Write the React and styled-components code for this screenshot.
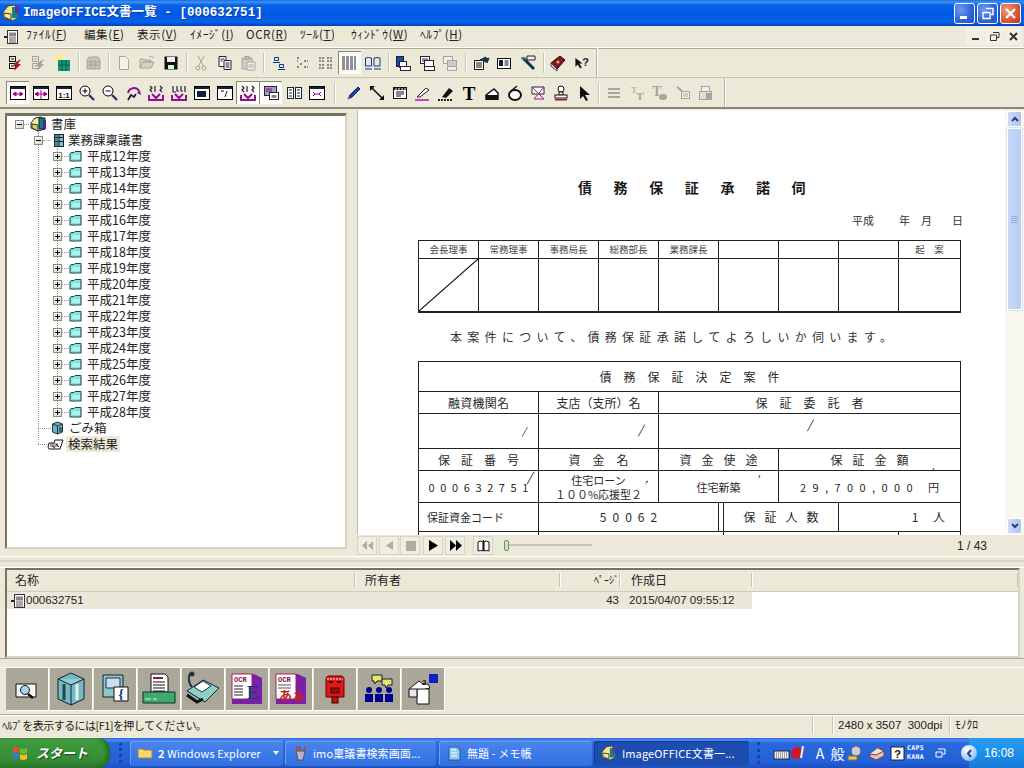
import React from "react";
import styled, { createGlobalStyle, css } from "styled-components";

const Global = createGlobalStyle`
  * { box-sizing: border-box; }
  html, body { margin: 0; padding: 0; background: #ece9d8; overflow: hidden; }
  body { font-family: "Noto Sans CJK JP", "Liberation Sans", sans-serif; color: #111; }
`;
const Win = styled.div`width:1024px;height:768px;display:flex;flex-direction:column;overflow:hidden;background:#ece9d8;font-size:12px;`;

/* ---------- title ---------- */
const TitleBar = styled.div`
  height:26px;flex:none;display:flex;align-items:center;padding:0 3px 0 2px;
  background:linear-gradient(180deg,#1a6ae8 0,#3d92f4 2px,#0a63e6 5px,#0058e2 14px,#0a62ea 22px,#0040b8 26px);
`;
const TitleText = styled.div`
  margin-left:3px;flex:1;color:#fff;font:700 12.5px/24px "Liberation Mono","Noto Sans CJK JP",monospace;letter-spacing:.08px;white-space:pre;
  text-shadow:1px 1px 0 #0b3ea8;
`;
const CapBtn = styled.div`
  width:21px;height:21px;margin-left:2px;border:1px solid #fff;border-radius:3px;display:flex;align-items:center;justify-content:center;
  background:${p=>p.$close?"radial-gradient(circle at 30% 30%,#f09a7c,#d8553a 60%,#b83a20)":"radial-gradient(circle at 30% 30%,#6f9bf0,#2f62d8 60%,#2450c0)"};
`;
/* ---------- menu ---------- */
const MenuBar = styled.div`height:22px;flex:none;display:flex;align-items:center;padding-left:3px;border-bottom:1px solid #fff;box-shadow:0 1px 0 #aca899;`;
const MenuIcon = styled.div`width:23px;display:flex;`;
const MenuItem = styled.div`width:${p=>p.$w}px;font-size:11.5px;line-height:20px;margin-top:-5px;white-space:nowrap;color:#222;letter-spacing:.6px;`;
const MenuKey = styled.u`text-underline-offset:1px;`;
const MdiGroup = styled.div`margin-left:auto;display:flex;gap:1px;padding-right:2px;`;
const MdiBtn = styled.div`width:18px;height:17px;display:flex;align-items:center;justify-content:center;background:#f2efe4;`;
/* ---------- toolbars ---------- */
const ToolRow = styled.div`height:${p=>p.$h}px;flex:none;display:flex;align-items:center;position:relative;border-bottom:${p=>p.$last?"2px solid #8a8778":"1px solid #c8c4b4"};`;
const ToolInner = styled.div`width:${p=>p.$w}px;height:100%;display:flex;align-items:center;padding-left:${p=>p.$pl}px;border-right:1px solid #b8b4a4;box-shadow:1px 0 0 #fff;`;
const TBtn = styled.div`
  width:${p=>p.$w||23.5}px;height:23px;flex:none;display:flex;align-items:center;justify-content:center;
  ${p=>p.$active&&css`background:#fbfaf5;box-shadow:inset 1px 1px 0 #8a8778,inset -1px -1px 0 #fff;`}
`;
const Sep = styled.div`width:${p=>p.$w||7}px;flex:none;height:20px;position:relative;&::after{content:"";position:absolute;left:45%;top:0;bottom:0;width:1px;background:#c8c4b4;box-shadow:1px 0 0 #fff;}`;
/* ---------- main ---------- */
const Main = styled.div`height:447px;flex:none;display:flex;`;
const TreePanel = styled.div`
  margin:4px 0 7px 5px;width:342px;background:#fff;border:2px solid #777466;border-right-color:#d8d5c6;border-bottom-color:#d8d5c6;border-top-width:3px;overflow:hidden;
`;
const TreeRow = styled.div`height:16px;display:flex;align-items:center;position:relative;padding-left:${p=>p.$pl}px;white-space:nowrap;`;
const Exp = styled.div`width:9px;height:9px;flex:none;border:1px solid #8c8c7c;background:linear-gradient(135deg,#fff,#d8d4c4);position:relative;
  &::before{content:"";position:absolute;left:1px;right:1px;top:3px;height:1px;background:#000;}
  ${p=>p.$plus&&css`&::after{content:"";position:absolute;top:1px;bottom:1px;left:3px;width:1px;background:#000;}`}`;
const Conn = styled.div`width:${p=>p.$w}px;height:0;flex:none;border-top:1px dotted #999;`;
const TreeIcon = styled.div`width:${p=>p.$w}px;flex:none;display:flex;margin-left:${p=>p.$ml||0}px;`;
const TreeLabel = styled.div`margin-left:${p=>p.$ml}px;font-size:12.5px;line-height:16px;margin-top:-1px;padding:0 1px;color:#222;${p=>p.$sel&&css`background:#ece9d8;padding:0 2px 0 2px;`}`;
const TreeGroup = styled.div`position:relative;&::before{content:"";position:absolute;left:${p=>p.$x}px;top:${p=>p.$t}px;bottom:${p=>p.$b}px;border-left:1px dotted #999;}`;
const Viewer = styled.div`margin:1px 0 0 10px;flex:1;display:flex;flex-direction:column;min-width:0;`;
const DocRow = styled.div`height:425px;flex:none;display:flex;background:#fff;`;
const Page = styled.div`flex:1;overflow:hidden;padding:68px 44px 0 60px;background:#fff;color:#333;border-left:1px solid #bbb;`;
const DocTitle = styled.div`padding-left:160px;font-size:14px;font-weight:700;line-height:18px;letter-spacing:21.6px;color:#1a1a1a;white-space:nowrap;`;
const DocDate = styled.div`margin-top:15px;padding-left:434px;height:18px;font-size:11px;line-height:18px;display:flex;color:#333;`;
const DateBit = styled.span`width:${p=>p.$w}px;flex:none;`;
const StampGrid = styled.div`margin-top:11px;width:543px;height:73px;display:grid;grid-template-columns:repeat(8,60px) 1fr;grid-template-rows:18px 1fr;border:1.5px solid #222;border-bottom-width:2px;`;
const StampCell = styled.div`border-right:${p=>p.$end?"none":"1px solid #222"};border-bottom:${p=>p.$head?"1px solid #222":"none"};font-size:9.5px;line-height:17px;text-align:center;color:#444;position:relative;`;
const Diag = styled.svg`position:absolute;inset:0;width:100%;height:100%;display:block;`;
const Sentence = styled.div`margin-top:15px;padding-left:32px;height:18px;font-size:12px;line-height:18px;letter-spacing:5.3px;white-space:nowrap;color:#333;`;
const DTable = styled.div`margin-top:15px;width:543px;border:1.5px solid #222;border-bottom:none;`;
const DRow = styled.div`height:${p=>p.$h}px;display:grid;grid-template-columns:${p=>p.$cols};border-bottom:${p=>p.$nb?"none":"1.5px solid #222"};`;
const DCell = styled.div`
  position:relative;display:flex;align-items:center;justify-content:${p=>p.$jl?"flex-start":p.$jr?"flex-end":"center"};text-align:center;white-space:nowrap;color:#2a2a2a;
  padding:0 ${p=>p.$jr||0}px 0 ${p=>p.$jl||0}px;
  border-right:${p=>p.$end?"none":"1.5px solid #222"};font-size:${p=>p.$fs||12}px;letter-spacing:${p=>p.$ls||0}px;text-indent:${p=>p.$jr||p.$jl?0:p.$ls||0}px;line-height:14px;
`;
const TwoLines = styled.div`text-indent:0;`;
const Mark = styled.span`position:absolute;right:${p=>p.$r}px;top:${p=>p.$t}px;font-size:${p=>p.$s||10}px;font-style:italic;line-height:10px;letter-spacing:0;text-indent:0;color:#111;`;
const Scroll = styled.div`width:19px;flex:none;background:#f8f7f0;display:flex;flex-direction:column;align-items:center;padding:1px 0;`;
const ScrollBtn = styled.div`width:15px;height:16px;flex:none;border:1px solid #fff;border-radius:2px;background:linear-gradient(90deg,#cfdcf8,#b0c4f0);display:flex;align-items:center;justify-content:center;`;
const ScrollThumb = styled.div`width:15px;height:182px;flex:none;margin-top:1px;border:1px solid #fff;border-radius:2px;background:linear-gradient(90deg,#c8d8f8,#b8ccf4);box-shadow:0 0 0 1px #d8e2f4;display:flex;flex-direction:column;align-items:center;justify-content:center;gap:1px;`;
const Grip = styled.i`display:block;width:7px;height:1px;background:#98aee0;`;
const ScrollFill = styled.div`flex:1;`;
const Pager = styled.div`height:21px;flex:none;display:flex;align-items:center;`;
const PBtn = styled.div`width:20px;height:19px;flex:none;margin-right:${p=>p.$mr||0}px;display:flex;align-items:center;justify-content:center;background:#f0eee2;box-shadow:inset 0 0 0 1px #d8d5c6;`;
const Slider = styled.div`margin-left:11px;width:90px;height:14px;flex:none;position:relative;&::before{content:"";position:absolute;left:2px;right:2px;top:5px;height:2px;background:#c8c5b6;}`;
const SliderThumb = styled.div`position:absolute;left:0;top:1px;width:5px;height:11px;border-radius:2px;background:#cfe4c4;border:1px solid #6a8f68;`;
const PageNo = styled.div`margin-left:auto;width:67px;font:12px/20px "Liberation Sans",sans-serif;color:#222;`;
/* ---------- list ---------- */
const Band = styled.div`height:12px;flex:none;border-top:1px solid #fff;border-bottom:1px solid #fff;position:relative;&::after{content:"";position:absolute;left:0;right:0;top:3px;height:2px;background:#d8d5c6;}`;
const ListBox = styled.div`margin:0 4px 0 5px;height:90px;flex:none;border:2px solid #777466;border-right-color:#d8d5c6;border-bottom-color:#d8d5c6;background:#fff;overflow:hidden;`;
const Header = styled.div`height:22px;display:grid;grid-template-columns:348px 205px 60px 132px 1fr;background:#ece9d8;border-bottom:1px solid #d0ccbc;`;
const HCell = styled.div`padding-left:${p=>p.$pl||0}px;text-align:${p=>p.$r?"right":"left"};padding-right:${p=>p.$r?1:0}px;font-size:${p=>p.$fs||12}px;line-height:20px;position:relative;color:#222;
  &::after{content:"";position:absolute;right:0;top:3px;bottom:4px;width:1px;background:#c8c4b4;box-shadow:1px 0 0 #fff;}`;
const ListRow = styled.div`height:17px;width:745px;display:grid;grid-template-columns:348px 205px 60px 132px;background:#ebe8da;`;
const LCell = styled.div`display:flex;align-items:center;justify-content:${p=>p.$r?"flex-end":"flex-start"};padding-left:${p=>p.$pl||0}px;padding-right:${p=>p.$r?1:0}px;font:11.5px/17px "Liberation Sans",sans-serif;color:#222;white-space:nowrap;`;
const Rule = styled.div`height:${p=>p.$h}px;flex:none;border-top:1px solid #aca899;border-bottom:1px solid #fff;`;
/* ---------- launch ---------- */
const Launch = styled.div`height:47px;flex:none;display:flex;gap:2px;padding:0 0 0 6px;`;
const LBtn = styled.div`width:42px;height:42px;background:#aca899;display:flex;align-items:center;justify-content:center;box-shadow:1px 1px 0 #fff;`;
/* ---------- status ---------- */
const Status = styled.div`height:23px;flex:none;display:flex;align-items:center;border-top:1px solid #fff;box-shadow:0 -1px 0 #aca899;font-size:11px;line-height:18px;color:#222;`;
const StatusMsg = styled.div`flex:1;padding-left:2px;letter-spacing:-.55px;white-space:nowrap;margin-top:-5px;`;
const StatusCell = styled.div`width:${p=>p.$w}px;flex:none;height:18px;margin-top:-4px;padding-left:${p=>p.$pl||0}px;border-left:1px solid #c8c4b4;box-shadow:inset 1px 0 0 #fff;white-space:pre;font-family:"Liberation Sans","Noto Sans CJK JP",sans-serif;font-size:11.5px;`;
/* ---------- taskbar ---------- */
const Taskbar = styled.div`height:30px;flex:none;display:flex;align-items:center;background:linear-gradient(180deg,#2a62d8 0,#4a8cf0 2px,#2868dc 5px,#2460d8 24px,#1c50c0 30px);color:#fff;`;
const Start = styled.div`width:110px;height:30px;flex:none;display:flex;align-items:center;padding-left:11px;border-radius:0 12px 12px 0;background:linear-gradient(180deg,#5aa85a 0,#3d9a3d 15%,#368c36 70%,#2c7a2c);box-shadow:inset -3px 0 4px #246824;`;
const StartText = styled.div`margin-left:7px;font:italic 700 13px/28px "Noto Sans CJK JP",sans-serif;letter-spacing:0;text-shadow:1px 1px 1px #1a4a1a;`;
const TaskDots = styled.div`width:20px;flex:none;height:24px;position:relative;&::after{content:"";position:absolute;left:9px;top:2px;bottom:2px;border-left:3px dotted #1a44a0;}`;
const TaskBtn = styled.div`
  width:${p=>p.$w}px;height:25px;flex:none;margin-right:${p=>p.$mr||2}px;padding-left:7px;display:flex;align-items:center;gap:5px;border-radius:3px;white-space:nowrap;overflow:hidden;font-size:11px;letter-spacing:.1px;
  background:${p=>p.$on?"#1e4db0":"linear-gradient(180deg,#4a86ec,#3a78e8 60%,#3470de)"};box-shadow:${p=>p.$on?"inset 1px 1px 1px #143890":"inset 1px 1px 0 #6ca0f4"};
`;
const TaskCount = styled.b`font-weight:700;`;
const TaskCaret = styled.div`margin-left:auto;margin-right:4px;width:0;height:0;border:3px solid transparent;border-top:4px solid #fff;margin-top:3px;`;
const Tray = styled.div`flex:1;display:flex;align-items:center;height:30px;padding-left:22px;position:relative;`;
const TrayDots = styled.div`position:absolute;left:6px;top:4px;bottom:4px;border-left:3px dotted #1a44a0;`;
const TrayGap = styled.div`width:${p=>p.$w}px;flex:none;`;
const Ime = styled.div`font-size:14px;line-height:30px;width:${p=>p.$w}px;text-align:center;flex:none;`;
const Caps = styled.div`width:28px;margin-left:2px;font:700 6.5px/9px "DejaVu Sans Mono",monospace;letter-spacing:.3px;`;
const Clock = styled.div`margin-left:auto;width:55px;height:30px;padding-left:15px;font:12px/30px "Liberation Sans",sans-serif;background:linear-gradient(180deg,#2a9cf0,#1a90e8 50%,#1878d8);position:relative;`;
const ClockCircle = styled.div`position:absolute;left:-8px;top:7px;width:16px;height:16px;border-radius:50%;background:radial-gradient(circle at 35% 30%,#fff,#a8cdf8 60%,#5a92e8);color:#1a44a0;display:flex;align-items:center;justify-content:center;`;
const Svg = styled.svg`display:block;flex:none;`;

/* ---------- small icons ---------- */
const Ic = ({ s = 18, v = 18, children }) => <Svg width={s} height={s} viewBox={`0 0 ${v} ${v}`}>{children}</Svg>;
const G = "#a8a598", K = "#000";
const bolt = (c) => <path d="M9 8 L14 5 L11 10 L14 10 L7 17 L9 12 L6 12 Z" fill={c} />;
const twoBoxes = (c) => <g fill="none" stroke={c}><rect x="2.5" y="2.5" width="6" height="5" /><rect x="2.5" y="9.5" width="6" height="5" /><path d="M4 5h3M4 12h3" /></g>;
const viewIcons = {
  fitW: <><rect x="1.5" y="2.5" width="15" height="13" fill="#fff" stroke={K} /><rect x="2" y="3" width="14" height="2" fill="#123" /><path d="M4 10h10M4 10l3-2v4zM14 10l-3-2v4z" stroke="#a00080" fill="#a00080" /></>,
  fitH: <><rect x="1.5" y="2.5" width="15" height="13" fill="#fff" stroke={K} /><rect x="2" y="3" width="14" height="2" fill="#123" /><path d="M3 10h12M9 6v9M3 10l3-2v4zM15 10l-3-2v4z" stroke="#a00080" fill="#a00080" /></>,
  one: <><rect x="1.5" y="2.5" width="15" height="13" fill="#fff" stroke={K} /><rect x="2" y="3" width="14" height="2" fill="#123" /><text x="9" y="14" fontSize="8" fontFamily="Liberation Sans" fontWeight="700" textAnchor="middle" fill="#111">1:1</text></>,
};
const zoom = (plus) => <><circle cx="7" cy="7" r="5" fill="#fff" stroke={K} /><path d="M4.5 7h5" stroke={K} />{plus && <path d="M7 4.5v5" stroke={K} />}<path d="M11 11l5 5" stroke="#336" strokeWidth="2.4" /></>;
const purpleTray = (mirror) => <g fill="none"><path d="M2 11v5h14v-5" strokeWidth="2" stroke="#901090" /><path d="M5 10l4 4 4-4" stroke="#901090" strokeWidth="2" /><path d={mirror ? "M3 2v6h3M7 2v5h2M11 2v5h2M15 2v6" : "M3 2l2 2-2 2 2 2M8 2v6M13 2l2 2-2 2 2 2"} stroke="#223" strokeWidth="1.2" /></g>;
const win = (inner) => <><rect x="1.5" y="2.5" width="15" height="13" fill="#fff" stroke={K} /><rect x="2" y="3" width="14" height="2" fill="#123" />{inner}</>;

const row1 = [
  [<>{twoBoxes("#111")}{bolt("#b01818")}</>],
  [<>{twoBoxes(G)}{bolt(G)}</>],
  [<><circle cx="5" cy="4" r="4" fill="#f6ee90" /><rect x="4" y="6" width="12" height="11" fill="#149080" /><path d="M8 6v11M12 6v11M4 11h12" stroke="#063" /></>],
  "s",
  [<><path d="M3 6l2-3h9l2 3v9H3z" fill="#c8c5b8" stroke={G} /><path d="M4 8h11M4 11h11M7 6v9M11 6v9" stroke={G} /></>],
  "s",
  [<path d="M4.5 2.5h6l3 3v10h-9z" fill="#f4f2e8" stroke={G} />],
  [<><path d="M2 14V5h4l1 1h6v2H5L2 14h11l3-6H5" fill="#d6d3c4" stroke={G} /><path d="M11 3q3-2 5 1" stroke={G} fill="none" /></>],
  [<><rect x="2.5" y="2.5" width="13" height="13" fill="#111" /><rect x="5" y="3" width="8" height="5" fill="#eee" /><rect x="6" y="11" width="6" height="4" fill="#cfc" /></>],
  "s",
  [<g fill="none" stroke={G}><circle cx="6" cy="14" r="2" /><circle cx="12" cy="14" r="2" /><path d="M6.5 12L12 2M11.5 12L6 2" /></g>],
  [<><path d="M3 2.5h7v10H3z" fill="#fff" stroke="#223" /><path d="M8 6.5h7v9H8z" fill="#fff" stroke="#223" /><path d="M4.5 5h4M4.5 7h2M9.5 9h4M9.5 11h4M9.5 13h4" stroke="#223" /></>],
  [<><path d="M3 4h10v11H3z" fill="#d0cdbe" stroke={G} /><rect x="6" y="2.5" width="4" height="3" fill="#c0bdae" stroke={G} /><path d="M8 8h8v8H8z" fill="#eee" stroke={G} /><path d="M9.5 11h5M9.5 13h5" stroke={G} /></>],
  "s",
  [<g fill="none" stroke="#003a90"><path d="M4.5 3.5h4v3h-4zM9.5 10.5h4v3h-4z" /><path d="M3 8.5h7M8 15.5h7" /></g>],
  [<g stroke="#223"><path d="M4 4h3M4 7h1M11 7h4M7 10h3M4 13h3M11 13h4" strokeDasharray="2 1" /></g>],
  [<g stroke="#223" strokeDasharray="2 1"><path d="M2 4h6M2 7h6M2 11h6M2 14h6M10 4h6M10 7h6M10 11h6M10 14h6" /></g>],
  [<g stroke="#223"><rect x="1.5" y="2.5" width="15" height="13" fill="#fff" stroke="none" /><path d="M2 3h14M2 5h14M2 7h14M2 9h14M2 11h14M2 13h14M2 15h14" strokeDasharray="3 1" /></g>, true],
  [<g fill="none" stroke="#003aa0"><path d="M1.5 4q3-1 6 0v8h-6zM10 4q3-1 6 0v8h-6z" /><path d="M1 15h7M10 15h7" /></g>],
  "s",
  [<><rect x="2.5" y="2.5" width="7" height="10" fill="#1848b0" stroke="#123" /><rect x="5.5" y="7.5" width="7" height="6" fill="#fff" stroke="#223" /><rect x="6.5" y="12.5" width="10" height="4" fill="#fff" stroke="#223" /></>],
  [<><rect x="2.5" y="2.5" width="9" height="7" fill="#fff" stroke="#223" /><path d="M4 5h6M4 7h6" stroke="#223" /><rect x="6.5" y="6.5" width="9" height="7" fill="#fff" stroke="#223" /><rect x="6.5" y="12.5" width="10" height="4" fill="#fff" stroke="#223" /></>],
  [<><rect x="2.5" y="2.5" width="9" height="7" fill="#eee" stroke={G} /><rect x="6.5" y="6.5" width="9" height="7" fill="#ccc" stroke={G} /><rect x="6.5" y="12.5" width="9" height="4" fill="#eee" stroke={G} /></>],
  "s",
  [<><path d="M2.5 6.5h9v9h-9z" fill="#fff" stroke="#111" /><path d="M4 9h6M4 11h6M4 13h6" stroke="#111" /><path d="M8 6l6-3v2l3-1-2 5" fill="#234" stroke="#123" /></>],
  [<><rect x="2.5" y="4.5" width="13" height="10" fill="#fff" stroke="#111" /><rect x="4" y="6" width="4" height="6" fill="#123" /><path d="M9.5 7h4M9.5 9h4M9.5 11h4" stroke="#111" /></>],
  [<><path d="M4 4l11 11" stroke="#003a50" strokeWidth="3" /><path d="M2 4h4l2 2M8 2h8v4H8z" fill="#eee" stroke="#222" /></>],
  "s",
  [<><path d="M2 9l9-7 5 4-8 9z" fill="#801830" stroke="#300" /><path d="M2 9l6 6v2l-6-5z" fill="#ddd" stroke="#444" /><circle cx="9" cy="8" r="1.5" fill="#e8b030" /></>],
  [<><path d="M2 3v11l3-3 3 5 2-1-3-5h4z" fill="#111" transform="scale(.8) translate(1,2)" /><text x="12.5" y="12" fontSize="11" fontWeight="700" fontFamily="Liberation Sans" textAnchor="middle" fill="#223">?</text></>],
];
const row2 = [
  [viewIcons.fitW, true], [viewIcons.fitH], [viewIcons.one],
  [zoom(true)], [zoom(false)],
  [<><path d="M4 9a6 6 0 0 1 11-2" fill="none" stroke="#901090" strokeWidth="2" /><path d="M4 16l3-5 3 2 2-3" fill="none" stroke="#113" strokeWidth="1.6" /><path d="M13 9l3-3 1 5z" fill="#901090" /></>],
  [purpleTray(false)], [purpleTray(true)],
  [win(<rect x="4" y="7" width="9" height="6" fill="#123" />)],
  [win(<path d="M5 7h3M11 7l-2 6" stroke="#111" fill="none" />)],
  [<>{purpleTray(false)}</>, true], [<><rect x="2.5" y="2.5" width="12" height="9" fill="#a0a0c8" stroke="#223" /><path d="M4 5h6M4 7h6" stroke="#808" /><rect x="7.5" y="8.5" width="9" height="7" fill="#fff" stroke="#223" /><rect x="9.5" y="11" width="5" height="3" fill="#888" /></>, true],
  [<g fill="#fff" stroke="#123"><rect x="2.5" y="3.5" width="6" height="11" /><rect x="10.5" y="3.5" width="6" height="11" /><path d="M4 6h3M4 9h3M4 12h3M12 6h3M12 9h3M12 12h3" /></g>],
  [win(<path d="M5 8l2 2-2 2M13 8l-2 2 2 2M7 10h4" stroke="#801080" fill="none" />)],
  "g",
  [<><path d="M3 15l2-4L13 3l2 2-8 8z" fill="#1848a8" stroke="#001a60" /><path d="M3 15l2-1-1-1z" fill="#f0d0a0" /></>],
  [<><path d="M3 3l12 12" stroke="#111" strokeWidth="1.6" /><path d="M2 2h5L2 7zM16 16h-5l5-5z" fill="#111" /></>],
  [<><rect x="2.5" y="3.5" width="13" height="11" fill="#fff" stroke="#111" /><path d="M2.5 5h13" stroke="#111" strokeDasharray="2 1" strokeWidth="2" /><path d="M5 8h8M5 10h8M5 12h5" stroke="#111" /></>],
  [<><path d="M3 13l9-9 3 2-9 7z" fill="#fff" stroke="#222" /><path d="M1 16h14" stroke="#d040c0" strokeWidth="2" /></>],
  [<><path d="M5 13l7-9 4 3-7 7z" fill="#111" /><path d="M1 16h15" stroke="#222" strokeDasharray="2 1" strokeWidth="2" /></>],
  [<text x="9" y="15.5" fontSize="19" fontWeight="700" fontFamily="Liberation Serif" textAnchor="middle" fill="#000">T</text>],
  [<><path d="M3 15v-4l8-6 4 4v6z" fill="#fff" stroke="#111" strokeWidth="1.5" /><rect x="3" y="11" width="12" height="5" fill="#111" /></>],
  [<><ellipse cx="9" cy="11" rx="6" ry="5" fill="#fff" stroke="#111" strokeWidth="2" /><path d="M5 7l6-5" stroke="#111" strokeWidth="1.5" /></>],
  [<><path d="M3 3h12v7H3z" fill="#fff" stroke="#222" /><path d="M3 3l12 12M15 3L5 15h10" fill="none" stroke="#a02080" /></>],
  [<><circle cx="9" cy="5" r="3" fill="#fff" stroke="#111" /><rect x="7" y="8" width="4" height="3" fill="#fff" stroke="#111" /><rect x="3" y="11" width="12" height="3" fill="#fff" stroke="#111" /><rect x="3" y="15" width="12" height="1.5" fill="#a01830" /></>],
  [<path d="M5 2v13l3-3 3 5 2-1-3-5h5z" fill="#111" />],
  "s",
  [<path d="M3 5h12M3 9h12M3 13h12" stroke={G} strokeWidth="2" />],
  [<><text x="6" y="9" fontSize="9" fontWeight="700" fontFamily="Liberation Serif" textAnchor="middle" fill="#bbb8a8">T</text><text x="12" y="16" fontSize="11" fontWeight="700" fontFamily="Liberation Serif" textAnchor="middle" fill={G}>T</text></>],
  [<><text x="6" y="12" fontSize="14" fontWeight="700" fontFamily="Liberation Serif" textAnchor="middle" fill={G}>T</text><ellipse cx="12" cy="13" rx="4" ry="3" fill={G} /></>],
  [<><path d="M3 3l5 4" stroke={G} strokeWidth="2" /><rect x="7.5" y="7.5" width="8" height="7" fill="#f4f2e8" stroke={G} /><path d="M9 10h5M9 12h5" stroke={G} /></>],
  [<><rect x="4.5" y="2.5" width="8" height="6" fill="#eee" stroke={G} /><rect x="2.5" y="7.5" width="12" height="8" fill="#ddd" stroke={G} /><rect x="9" y="9" width="6" height="6" fill={G} /></>],
];

const TreeFolder = () => <Ic s={14} v={14}><path d="M1 12V4.5l1-1h3l1-1h6v9.5z" fill="#7ce4e0" stroke="#204050" /><path d="M3 6h8v4H3z" fill="#b4f0ec" /></Ic>;
const RootIcon = () => <Ic s={18} v={18}><path d="M2 8l4-5 6-1 4 3v9l-7 2-7-3z" fill="#f0ee98" stroke="#223" /><path d="M10 3h6v11h-6z" fill="#108070" stroke="#023" /><path d="M14 6l3-1v9l-3 1z" fill="#6018a0" /><path d="M3 9l6 1v6l-6-3z" fill="#d8d070" stroke="#334" /></Ic>;
const SlipIcon = () => <Ic s={14} v={14}><rect x="3.5" y="1.5" width="9" height="12" fill="#80c0c0" stroke="#123" /><path d="M3.5 4.5h9M3.5 8.5h9M8 1.5v12" stroke="#123" /><rect x="3.5" y="1.5" width="4" height="12" fill="#205858" opacity=".5" /></Ic>;
const TrashIcon = () => <Ic s={14} v={14}><path d="M1.5 3l5-2 5 2v8l-5 2-5-2z" fill="#70b0b8" stroke="#234" /><path d="M1.5 3l5 2 5-2M6.5 5v8" stroke="#234" fill="none" /><rect x="8" y="6" width="3" height="5" fill="#406868" /></Ic>;
const SearchFolder = () => <Ic s={18} v={18}><path d="M1 12l1-4h5l1-3h8l-3 9H2z" fill="#fff" stroke="#111" /><path d="M3 9h8M3 11h8" stroke="#444" /><path d="M9 9l3 3M5 11l3 2" stroke="#111" /></Ic>;
const DocSmall = () => <Ic s={16} v={16}><rect x="4.5" y="1.5" width="10" height="13" fill="#fff" stroke="#333" /><rect x="6" y="3.5" width="7" height="4" fill="#888" /><path d="M6 9h7M6 11h7M6 13h7" stroke="#555" /><path d="M1 8h3" stroke="#225" strokeWidth="2" /></Ic>;

const Launches = [
  <Ic s={26} v={26} key="1"><path d="M2 8h20v13H2z" fill="#f6f6f2" stroke="#111" /><circle cx="11" cy="14" r="4.5" fill="#a8d8f0" stroke="#111" /><path d="M14 18l5 4" stroke="#111" strokeWidth="2.5" /></Ic>,
  <Ic s={34} v={34} key="2"><path d="M4 7l13-6 13 6v20l-13 6-13-6z" fill="#78b8c0" stroke="#123" /><path d="M4 7l13 6 13-6" fill="#8cd0d8" stroke="#123" /><path d="M17 13v20" stroke="#123" /><path d="M23 12v16" stroke="#e0f4f4" strokeWidth="3" /><path d="M10 12v16" stroke="#204848" strokeWidth="3" /></Ic>,
  <Ic s={32} v={32} key="3"><path d="M4 2h20v22H4z" fill="#8cc8c8" stroke="#123" /><path d="M7 5h14v10H7z" fill="#cde" stroke="#234" /><path d="M15 14h14v14H15z" fill="#fff" stroke="#111" /><text x="22" y="26" fontSize="14" fontWeight="700" textAnchor="middle" fontFamily="Liberation Serif" fill="#003a90">{"{"}</text></Ic>,
  <Ic s={34} v={34} key="4"><path d="M9 2h14l3 3v15H9z" fill="#fff" stroke="#111" /><path d="M11 6h10" stroke="#802040" strokeWidth="2" /><path d="M11 10h12M11 13h12M11 16h12M11 19h12" stroke="#111" /><path d="M1 20h32v11H1z" fill="#40a870" stroke="#0c3020" /><path d="M3 27h6M11 27h4" stroke="#f0f0d0" /></Ic>,
  <Ic s={36} v={36} key="5"><path d="M2 20l16-11 16 8-14 14z" fill="#8cd0c8" stroke="#123" /><path d="M9 16l9-6 8 5-9 6z" fill="#fff" stroke="#234" /><path d="M6 2c-3 2-3 10 1 14" stroke="#234" strokeWidth="2" fill="none" /><circle cx="7" cy="3" r="2.5" fill="#234" /><path d="M2 24l10 7 6-3" stroke="#111" strokeWidth="3" fill="none" /></Ic>,
  <Ic s={34} v={34} key="6"><path d="M2 2h22l8 4v26H2z" fill="#7a20a8" /><path d="M2 2h20v25H2z" fill="#fff" stroke="#a02060" /><text x="4" y="10" fontSize="7" fontWeight="700" fontFamily="Liberation Mono" fill="#801040">OCR</text><path d="M4 14h9M4 17h9M4 20h9M4 23h9" stroke="#223" /><text x="23" y="27" fontSize="18" fontWeight="700" fontFamily="Liberation Serif" textAnchor="middle" fill="#103a80">E</text></Ic>,
  <Ic s={34} v={34} key="7"><path d="M2 2h22l8 4v26H2z" fill="#7a20a8" /><path d="M2 2h20v25H2z" fill="#fff" stroke="#a02060" /><text x="4" y="10" fontSize="7" fontWeight="700" fontFamily="Liberation Mono" fill="#801040">OCR</text><path d="M4 13h13M4 16h13" stroke="#555" /><text x="18" y="28" fontSize="13" fontWeight="700" fontFamily="Noto Sans CJK JP" textAnchor="middle" fill="#c02020">あぁ</text></Ic>,
  <Ic s={32} v={32} key="8"><path d="M9 3h14l2 2v19H7V5z" fill="#e01818" stroke="#600" /><path d="M8 6h16" stroke="#f88" strokeWidth="2" strokeDasharray="2 1" /><path d="M10 9h4M18 9h4" stroke="#300" strokeWidth="2" /><rect x="12" y="15" width="8" height="5" fill="#a01010" stroke="#400" /><rect x="13" y="24" width="6" height="6" fill="#c01010" stroke="#400" /></Ic>,
  <Ic s={34} v={34} key="9"><path d="M10 3h10v6h-5l-2 3-1-3h-2z" fill="#f0e070" stroke="#123" /><path d="M20 7h10v6h-4l-2 3-1-3h-3z" fill="#f0e070" stroke="#123" /><g fill="#000090"><circle cx="7" cy="18" r="3" /><circle cx="17" cy="18" r="3" /><circle cx="27" cy="18" r="3" /><path d="M3 22h8v8H3zM13 22h8v8h-8zM23 22h8v8h-8z" /></g></Ic>,
  <Ic s={34} v={34} key="10"><rect x="23" y="2" width="9" height="9" fill="#1020c0" /><path d="M3 17l10-8 4 3h5l2 4-8 2" fill="#fff" stroke="#111" /><text x="16" y="13" fontSize="8" fontWeight="700" fontFamily="Liberation Sans" fill="#111">2</text><path d="M11 17h12v15H11z" fill="#fff" stroke="#111" /><path d="M3 17l8 0v8H3z" fill="#e8e8e8" stroke="#111" /></Ic>,
];

const Flag = ({ s = 18 }) => <Ic s={s} v={18}><path d="M2 4q3-2 6 0v5q-3-2-6 0z" fill="#e8502a" /><path d="M9 4q3 2 7 0v5q-4 2-7 0z" fill="#70b830" /><path d="M2 10q3-2 6 0v5q-3-2-6 0z" fill="#3878e0" /><path d="M9 10q3 2 7 0v5q-4 2-7 0z" fill="#f4c020" /></Ic>;
const AppIcon = ({ s = 18 }) => <Ic s={s} v={18}><path d="M1 8l5-6 6-1 4 3v10l-6 3-9-3z" fill="#f0e890" stroke="#345" /><path d="M10 3h6v11h-6z" fill="#108878" /><path d="M2 9l7 1v6l-7-3z" fill="#f4e8a0" stroke="#333" /><path d="M13 2l4-1v8l-4 1z" fill="#6030a8" /></Ic>;

const stampHeads = ["会長理事", "常務理事", "事務局長", "総務部長", "業務課長", "", "", "", "起　案"];
const years = [12,13,14,15,16,17,18,19,20,21,22,23,24,25,26,27,28];
const menus = [["ﾌｧｲﾙ","F",58],["編集","E",53],["表示","V",53],["ｲﾒｰｼﾞ","I",56],["OCR","R",54],["ﾂｰﾙ","T",51],["ｳｨﾝﾄﾞｳ","W",69],["ﾍﾙﾌﾟ","H",50]];

const renderBtn = (w) => (b, i) => {
  if (b === "s") return <Sep key={i} />;
  if (b === "g") return <Sep key={i} $w={14} />;
  return <TBtn key={i} $w={w} $active={b[1]}><Ic>{b[0]}</Ic></TBtn>;
};

const Chev = ({ up }) => <Ic s={10} v={10}><path d={up ? "M2 7l3-3 3 3" : "M2 3l3 3 3-3"} fill="none" stroke="#2a3f80" strokeWidth="2" /></Ic>;

export default function App() {
  return (
    <Win>
      <Global />
      <TitleBar>
        <AppIcon />
        <TitleText>ImageOFFICE文書一覧 - [000632751]</TitleText>
        <CapBtn><Ic s={13} v={13}><rect x="2" y="9" width="7" height="3" fill="#fff" /></Ic></CapBtn>
        <CapBtn><Ic s={13} v={13}><path d="M5 1.5h7v6h-2M2 5.5h7v6H2z" fill="none" stroke="#fff" strokeWidth="1.4" /></Ic></CapBtn>
        <CapBtn $close><Ic s={13} v={13}><path d="M2 2l9 9M11 2l-9 9" stroke="#fff" strokeWidth="2.2" /></Ic></CapBtn>
      </TitleBar>
      <MenuBar>
        <MenuIcon><DocSmall /></MenuIcon>
        {menus.map(([t, k, w]) => <MenuItem key={k} $w={w}>{t}(<MenuKey>{k}</MenuKey>)</MenuItem>)}
        <MdiGroup>
          <MdiBtn><Ic s={11} v={11}><rect x="2" y="7" width="7" height="2" fill="#333" /></Ic></MdiBtn>
          <MdiBtn><Ic s={11} v={11}><path d="M4 1.5h6v5h-2M1.5 4h6v5.5h-6z" fill="none" stroke="#333" /></Ic></MdiBtn>
          <MdiBtn><Ic s={11} v={11}><path d="M2 2l7 7M9 2l-7 7" stroke="#333" strokeWidth="2" /></Ic></MdiBtn>
        </MdiGroup>
      </MenuBar>
      <ToolRow $h={30}><ToolInner $w={597} $pl={4}>{row1.map(renderBtn(23.5))}</ToolInner></ToolRow>
      <ToolRow $h={31} $last><ToolInner $w={725} $pl={6}>{row2.map(renderBtn(23))}</ToolInner></ToolRow>
      <Main>
        <TreePanel>
          <TreeRow $pl={8}><Exp /><Conn $w={5} /><TreeIcon $w={18}><RootIcon /></TreeIcon><TreeLabel $ml={3}>書庫</TreeLabel></TreeRow>
          <TreeGroup $x={31} $t={0} $b={8}>
            <TreeRow $pl={27}><Exp /><Conn $w={8} /><TreeIcon $w={14}><SlipIcon /></TreeIcon><TreeLabel $ml={2}>業務課稟議書</TreeLabel></TreeRow>
            <TreeGroup $x={50} $t={0} $b={8}>
              {years.map((y) => (
                <TreeRow key={y} $pl={46}><Exp $plus /><Conn $w={7} /><TreeIcon $w={14}><TreeFolder /></TreeIcon><TreeLabel $ml={3}>平成{y}年度</TreeLabel></TreeRow>
              ))}
            </TreeGroup>
            <TreeRow $pl={31}><Conn $w={13} /><TreeIcon $w={14}><TrashIcon /></TreeIcon><TreeLabel $ml={3}>ごみ箱</TreeLabel></TreeRow>
            <TreeRow $pl={31}><Conn $w={9} /><TreeIcon $w={18}><SearchFolder /></TreeIcon><TreeLabel $ml={1} $sel>検索結果</TreeLabel></TreeRow>
          </TreeGroup>
        </TreePanel>
        <Viewer>
          <DocRow>
            <Page>
              <DocTitle>債務保証承諾伺</DocTitle>
              <DocDate><DateBit $w={47}>平成</DateBit><DateBit $w={22}>年</DateBit><DateBit $w={31}>月</DateBit><DateBit $w={15}>日</DateBit></DocDate>
              <StampGrid>
                {stampHeads.map((h, i) => <StampCell key={i} $head $end={i === 8}>{h}</StampCell>)}
                <StampCell><Diag viewBox="0 0 60 55" preserveAspectRatio="none"><line x1="0" y1="55" x2="60" y2="0" stroke="#111" strokeWidth="1.2" /></Diag></StampCell>
                {[0,1,2,3,4,5,6].map((i) => <StampCell key={i} />)}
                <StampCell $end />
              </StampGrid>
              <Sentence>本案件について、債務保証承諾してよろしいか伺います。</Sentence>
              <DTable>
                <DRow $h={30} $cols="1fr"><DCell $end $ls={12}>債務保証決定案件</DCell></DRow>
                <DRow $h={22} $cols="120px 120px 1fr">
                  <DCell $ls={0.2}>融資機関名</DCell><DCell>支店（支所）名</DCell><DCell $end $ls={12}>保証委託者</DCell>
                </DRow>
                <DRow $h={35} $cols="120px 120px 1fr">
                  <DCell><Mark $r={12} $t={12}>/</Mark></DCell><DCell><Mark $r={15} $t={10} $s={12}>/</Mark></DCell><DCell $end><Mark $r={148} $t={5} $s={12}>/</Mark></DCell>
                </DRow>
                <DRow $h={22} $cols="120px 120px 120px 1fr">
                  <DCell $ls={11}>保証番号</DCell><DCell $ls={12}>資金名</DCell><DCell $ls={10}>資金使途</DCell><DCell $end $ls={10}>保証金額</DCell>
                </DRow>
                <DRow $h={32} $cols="120px 120px 120px 1fr">
                  <DCell $fs={11} $ls={5.6}>000632751<Mark $r={6} $t={1} $s={13}>/</Mark></DCell>
                  <DCell $fs={11}><TwoLines>住宅ローン<br />１００%応援型２</TwoLines><Mark $r={10} $t={2}>,</Mark></DCell>
                  <DCell $fs={11}>住宅新築<Mark $r={19} $t={3}>&#39;</Mark></DCell>
                  <DCell $end $fs={11} $ls={6.4}>29,700,000 円<Mark $r={27} $t={-4}>&#39;</Mark></DCell>
                </DRow>
                <DRow $h={29} $cols="120px 180px 5px 115px 1fr">
                  <DCell $fs={11} $jl={8}>保証資金コード</DCell>
                  <DCell $ls={6}>50062</DCell>
                  <DCell />
                  <DCell $ls={9}>保証人数</DCell>
                  <DCell $end $jr={9} $ls={6}>1 人</DCell>
                </DRow>
                <DRow $h={30} $nb $cols="120px 185px 175px 1fr"><DCell /><DCell /><DCell /><DCell $end /></DRow>
              </DTable>
            </Page>
            <Scroll>
              <ScrollBtn><Chev up /></ScrollBtn>
              <ScrollThumb><Grip /><Grip /><Grip /><Grip /></ScrollThumb>
              <ScrollFill />
              <ScrollBtn><Chev /></ScrollBtn>
            </Scroll>
          </DocRow>
          <Pager>
            <PBtn $mr={2}><Ic s={13} v={13}><path d="M6 2v9L1 6.5zM12 2v9L7 6.5z" fill="#b0ad9e" /></Ic></PBtn>
            <PBtn $mr={1}><Ic s={13} v={13}><path d="M10 2v9L3 6.5z" fill="#b0ad9e" /></Ic></PBtn>
            <PBtn $mr={3}><Ic s={13} v={13}><rect x="2" y="2" width="10" height="10" fill="#b0ad9e" /></Ic></PBtn>
            <PBtn $mr={2}><Ic s={13} v={13}><path d="M2 1v11l9-5.5z" fill="#000" /></Ic></PBtn>
            <PBtn $mr={8}><Ic s={13} v={13}><path d="M1 1v11l6-5.5zM7 1v11l6-5.5z" fill="#000" /></Ic></PBtn>
            <PBtn><Ic s={15} v={15}><path d="M2 4q3-2 5 0v9q-2-1-5 0zM8 4q2-2 5 0v9q-3-1-5 0z M7.5 2v11" fill="#fff" stroke="#111" /></Ic></PBtn>
            <Slider><SliderThumb /></Slider>
            <PageNo>1 / 43</PageNo>
          </Pager>
        </Viewer>
      </Main>
      <Band />
      <ListBox>
        <Header>
          <HCell $pl={8}>名称</HCell><HCell $pl={10}>所有者</HCell><HCell $r $fs={10}>ﾍﾟｰｼﾞ</HCell><HCell $pl={11}>作成日</HCell><HCell />
        </Header>
        <ListRow>
          <LCell $pl={3}><DocSmall />000632751</LCell><LCell /><LCell $r>43</LCell><LCell $pl={9}>2015/04/07 09:55:12</LCell>
        </ListRow>
      </ListBox>
      <Rule $h={10} />
      <Launch>{Launches.map((l, i) => <LBtn key={i}>{l}</LBtn>)}</Launch>
      <Status>
        <StatusMsg>ﾍﾙﾌﾟを表示するには[F1]を押してください。</StatusMsg>
        <StatusCell $w={20} />
        <StatusCell $w={117} $pl={5}>2480 x 3507  300dpi</StatusCell>
        <StatusCell $w={75} $pl={5}>ﾓﾉｸﾛ</StatusCell>
      </Status>
      <Taskbar>
        <Start><Flag /><StartText>スタート</StartText></Start>
        <TaskDots />
        <TaskBtn $w={153}>
          <Ic s={16} v={16}><path d="M1 13V4h5l1 1h8v8z" fill="#f0d878" stroke="#a08030" /></Ic>
          <span><TaskCount>2</TaskCount> Windows Explorer</span><TaskCaret />
        </TaskBtn>
        <TaskBtn $w={151} $mr={3}>
          <Ic s={16} v={16}><path d="M4 6l2 9h5l2-9z" fill="#b8b0d8" stroke="#554" /><path d="M6 6l-2-5M8 6V1M11 6l3-5" stroke="#c04020" strokeWidth="1.4" /></Ic>
          <span>imo稟議書検索画面...</span>
        </TaskBtn>
        <TaskBtn $w={153}>
          <Ic s={16} v={16}><path d="M3 2h8l3 3v10H3z" fill="#90c8f0" stroke="#2a5a90" /><path d="M5 5h5M5 8h6M5 11h6" stroke="#fff" /></Ic>
          <span>無題 - メモ帳</span>
        </TaskBtn>
        <TaskBtn $w={155} $on $mr={0}>
          <AppIcon s={16} /><span>ImageOFFICE文書一...</span>
        </TaskBtn>
        <Tray>
          <TrayDots />
          <Ic s={17} v={17}><rect x="1" y="6" width="15" height="8" fill="#eee" stroke="#223" /><path d="M3 8h11M3 10h11M3 12h11" stroke="#555" strokeDasharray="1 1" /></Ic>
          <Ic s={17} v={17}><circle cx="7" cy="8" r="6" fill="#d01828" /><path d="M13 1l-2 12" stroke="#eee" strokeWidth="2" /></Ic>
          <TrayGap $w={4} />
          <Ime $w={18}>A</Ime><Ime $w={17}>般</Ime>
          <Ic s={17} v={17}><circle cx="10" cy="6" r="5" fill="#c8ccd8" stroke="#555" /><path d="M2 11h9v4H2z" fill="#e8c060" stroke="#774" /></Ic>
          <TrayGap $w={5} />
          <Ic s={18} v={18}><path d="M2 10l8-6 6 3v5l-8 4-6-3z" fill="#e8c0b8" stroke="#744" /><path d="M10 4l6 3-8 4-6-1" fill="#f4e0d0" stroke="#744" /></Ic>
          <TrayGap $w={4} />
          <Ic s={15} v={15}><rect x="1" y="1" width="13" height="13" fill="#fff" stroke="#223" /><text x="7.5" y="12" fontSize="11" fontWeight="700" fontFamily="Liberation Sans" textAnchor="middle" fill="#111">?</text></Ic>
          <Caps><div>CAPS</div><div>KANA</div></Caps>
          <Ic s={11} v={11}><path d="M3 1h7v5H8M1 4h6v5H1z" stroke="#fff" fill="none" /></Ic>
          <Clock><ClockCircle><Ic s={9} v={9}><path d="M6 1L3 4.5 6 8" fill="none" stroke="#1a44a0" strokeWidth="2" /></Ic></ClockCircle>16:08</Clock>
        </Tray>
      </Taskbar>
    </Win>
  );
}
